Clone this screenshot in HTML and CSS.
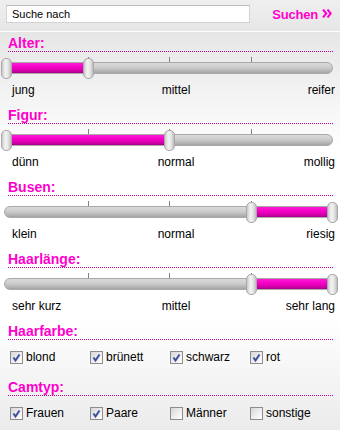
FILE: index.html
```html
<!DOCTYPE html>
<html lang="de">
<head>
<meta charset="utf-8">
<title>Suche</title>
<link rel="stylesheet" href="styles.css">
</head>
<body>
<header class="search">
  <input class="search-input" type="text" value="Suche nach">
  <a class="search-btn" href="#">Suchen<svg class="raquo" width="10" height="9" viewBox="0 0 10 9"><polyline points="1,0.5 4.3,4.5 1,8.5"/><polyline points="5.5,0.5 8.8,4.5 5.5,8.5"/></svg></a>
</header>
<main class="filters">
  <section class="group">
    <h2 class="group-title">Alter:</h2>
    <div class="slider" style="--a:0;--b:0.25">
      <div class="ticks"><i></i><i></i><i></i><i></i></div>
      <div class="track"></div>
      <div class="fill"></div>
      <div class="handle h-a"></div>
      <div class="handle h-b"></div>
    </div>
    <div class="scale"><span>jung</span><span class="mid">mittel</span><span class="end">reifer</span></div>
  </section>
  <section class="group">
    <h2 class="group-title">Figur:</h2>
    <div class="slider" style="--a:0;--b:0.5">
      <div class="ticks"><i></i><i></i><i></i><i></i></div>
      <div class="track"></div>
      <div class="fill"></div>
      <div class="handle h-a"></div>
      <div class="handle h-b"></div>
    </div>
    <div class="scale"><span>dünn</span><span class="mid">normal</span><span class="end">mollig</span></div>
  </section>
  <section class="group">
    <h2 class="group-title">Busen:</h2>
    <div class="slider" style="--a:0.75;--b:1">
      <div class="ticks"><i></i><i></i><i></i><i></i></div>
      <div class="track"></div>
      <div class="fill"></div>
      <div class="handle h-a"></div>
      <div class="handle h-b"></div>
    </div>
    <div class="scale"><span>klein</span><span class="mid">normal</span><span class="end">riesig</span></div>
  </section>
  <section class="group">
    <h2 class="group-title">Haarlänge:</h2>
    <div class="slider" style="--a:0.75;--b:1">
      <div class="ticks"><i></i><i></i><i></i><i></i></div>
      <div class="track"></div>
      <div class="fill"></div>
      <div class="handle h-a"></div>
      <div class="handle h-b"></div>
    </div>
    <div class="scale"><span>sehr kurz</span><span class="mid">mittel</span><span class="end">sehr lang</span></div>
  </section>
  <section class="group-checks">
    <h2 class="group-title">Haarfarbe:</h2>
    <div class="checks">
      <label class="check"><span class="box on"><svg width="11" height="11" viewBox="0 0 11 11"><polyline points="2.5,5.5 4.5,8.5 8.5,2.5"/></svg></span>blond</label>
      <label class="check"><span class="box on"><svg width="11" height="11" viewBox="0 0 11 11"><polyline points="2.5,5.5 4.5,8.5 8.5,2.5"/></svg></span>brünett</label>
      <label class="check"><span class="box on"><svg width="11" height="11" viewBox="0 0 11 11"><polyline points="2.5,5.5 4.5,8.5 8.5,2.5"/></svg></span>schwarz</label>
      <label class="check"><span class="box on"><svg width="11" height="11" viewBox="0 0 11 11"><polyline points="2.5,5.5 4.5,8.5 8.5,2.5"/></svg></span>rot</label>
    </div>
  </section>
  <section class="group-checks">
    <h2 class="group-title">Camtyp:</h2>
    <div class="checks">
      <label class="check"><span class="box on"><svg width="11" height="11" viewBox="0 0 11 11"><polyline points="2.5,5.5 4.5,8.5 8.5,2.5"/></svg></span>Frauen</label>
      <label class="check"><span class="box on"><svg width="11" height="11" viewBox="0 0 11 11"><polyline points="2.5,5.5 4.5,8.5 8.5,2.5"/></svg></span>Paare</label>
      <label class="check"><span class="box"></span>Männer</label>
      <label class="check"><span class="box"></span>sonstige</label>
    </div>
  </section>
</main>
</body>
</html>
```

FILE: styles.css
```css
html, body {
  margin: 0;
  padding: 0;
}
body {
  width: 340px;
  height: 430px;
  overflow: hidden;
  font-family: "Liberation Sans", Arial, sans-serif;
  color: #000;
  background: linear-gradient(to bottom, #e6e6e6 33px, #ffffff 150px, #ffffff 320px, #ebebeb 430px);
}

/* header */
.search {
  height: 32px;
  box-sizing: border-box;
  border-bottom: 1px solid #ffffff;
  display: flex;
  align-items: center;
  padding: 0 8px 0 6px;
  background: linear-gradient(to bottom, #efefef, #e6e6e6);
}
.search-input {
  width: 244px;
  height: 18px;
  box-sizing: border-box;
  margin: 0;
  margin-top: -3px;
  padding: 0 5px;
  border: 1px solid #d2d2d2;
  border-top-color: #bdbdbd;
  background: #fff;
  font-family: "Liberation Sans", Arial, sans-serif;
  font-size: 11px;
  color: #000;
  outline: none;
}
.search-btn {
  margin-left: auto;
  display: flex;
  align-items: flex-start;
  gap: 4px;
  color: #ff00cc;
  font-weight: bold;
  font-size: 13px;
  line-height: 15px;
  letter-spacing: -0.2px;
  text-decoration: none;
  margin-top: -2px;
}
.raquo {
  margin-top: 2px;
}
.raquo polyline {
  fill: none;
  stroke: #ff00cc;
  stroke-width: 2;
}

/* groups */
.filters {
  padding-top: 3px;
}
.group {
  margin-bottom: 10px;
}
.group-title {
  margin: 0 7px 0 8px;
  font-size: 14px;
  font-weight: bold;
  line-height: 16px;
  color: #ff00cc;
  border-bottom: 1px dotted #c4009a;
}

/* slider */
.slider {
  position: relative;
  height: 31px;
  box-sizing: border-box;
  padding-top: 5px;
  margin: 0 7px 0 4px;
}
.ticks {
  display: grid;
  grid-template-columns: repeat(4, 1fr);
  height: 5px;
  margin-left: 3px;
}
.ticks i {
  border-right: 1px solid #808080;
}
.ticks i:last-child {
  border-right: none;
}
.track {
  height: 12px;
  box-sizing: border-box;
  border: 1px solid #a9a9a9;
  border-radius: 6px;
  background: linear-gradient(to bottom, #d9d9d9 0%, #cfcfcf 40%, #b8b8b8 75%, #a4a4a4 100%);
}
.fill {
  position: absolute;
  top: 11px;
  height: 10px;
  left: calc(2.5px + var(--a) * 326px);
  width: calc((var(--b) - var(--a)) * 326px);
  background: linear-gradient(to bottom, #ff1ad6 0%, #f000c4 45%, #d600ac 75%, #a80086 100%);
}
.handle {
  position: absolute;
  top: 6px;
  width: 11px;
  height: 21px;
  box-sizing: border-box;
  border: 1px solid #a8a8a8;
  border-radius: 5px;
  background: linear-gradient(to right, #c9c9c9 0%, #f2f2f2 35%, #e8e8e8 65%, #bdbdbd 100%);
}
.h-a {
  left: calc(2.5px + var(--a) * 326px - 5.5px);
}
.h-b {
  left: calc(2.5px + var(--b) * 326px - 5.5px);
}
.scale {
  display: grid;
  grid-template-columns: 1fr auto 1fr;
  padding: 0 5px 0 12px;
  font-size: 12px;
  line-height: 14px;
  height: 14px;
}
.scale .mid {
  margin-left: 5px;
}
.scale .end {
  text-align: right;
}

/* checkboxes */
.group-checks {
  margin-bottom: 15px;
}
.checks {
  display: grid;
  grid-template-columns: repeat(4, 80px);
  padding-left: 10px;
  margin-top: 11px;
  font-size: 12px;
  line-height: 13px;
}
.check {
  display: flex;
  align-items: flex-end;
  gap: 3px;
}
.box {
  width: 13px;
  height: 13px;
  box-sizing: border-box;
  border: 1px solid #8c8c8c;
  background: linear-gradient(135deg, #d6d6d6 0%, #ececec 50%, #ffffff 100%);
  display: flex;
}
.box svg polyline {
  fill: none;
  stroke: #3c4d9e;
  stroke-width: 2;
}
```
